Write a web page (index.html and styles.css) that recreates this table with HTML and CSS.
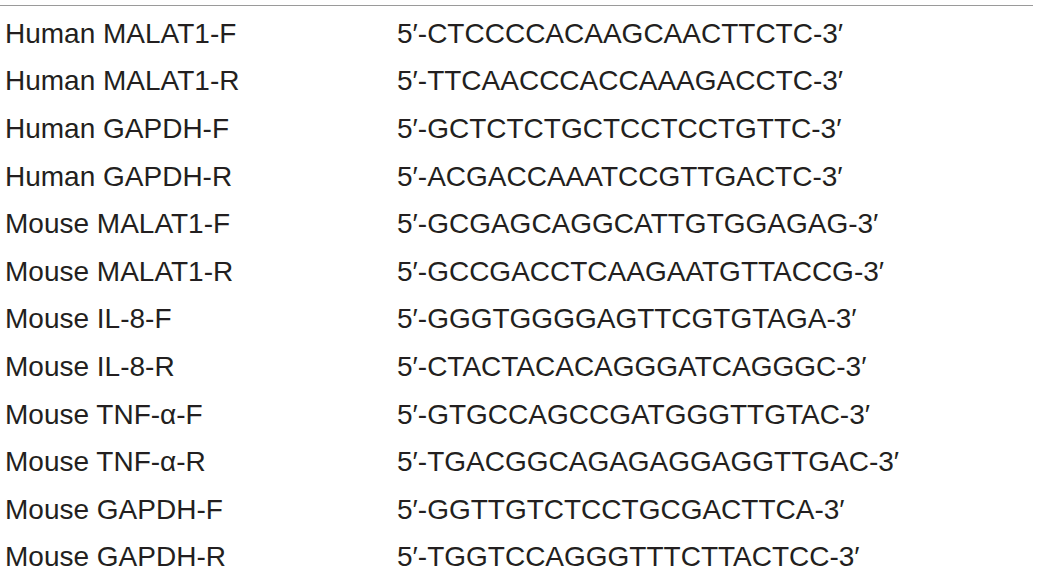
FILE: index.html
```html
<!DOCTYPE html>
<html>
<head>
<meta charset="utf-8">
<link rel="stylesheet" href="styles.css">
</head>
<body>
<div class="table">
  <div class="row"><span class="name">Human MALAT1-F</span><span class="seq">5′-CTCCCCACAAGCAACTTCTC-3′</span></div>
  <div class="row"><span class="name">Human MALAT1-R</span><span class="seq">5′-TTCAACCCACCAAAGACCTC-3′</span></div>
  <div class="row"><span class="name">Human GAPDH-F</span><span class="seq">5′-GCTCTCTGCTCCTCCTGTTC-3′</span></div>
  <div class="row"><span class="name">Human GAPDH-R</span><span class="seq">5′-ACGACCAAATCCGTTGACTC-3′</span></div>
  <div class="row"><span class="name">Mouse MALAT1-F</span><span class="seq">5′-GCGAGCAGGCATTGTGGAGAG-3′</span></div>
  <div class="row"><span class="name">Mouse MALAT1-R</span><span class="seq">5′-GCCGACCTCAAGAATGTTACCG-3′</span></div>
  <div class="row"><span class="name">Mouse IL-8-F</span><span class="seq">5′-GGGTGGGGAGTTCGTGTAGA-3′</span></div>
  <div class="row"><span class="name">Mouse IL-8-R</span><span class="seq">5′-CTACTACACAGGGATCAGGGC-3′</span></div>
  <div class="row"><span class="name">Mouse TNF-α-F</span><span class="seq">5′-GTGCCAGCCGATGGGTTGTAC-3′</span></div>
  <div class="row"><span class="name">Mouse TNF-α-R</span><span class="seq">5′-TGACGGCAGAGAGGAGGTTGAC-3′</span></div>
  <div class="row"><span class="name">Mouse GAPDH-F</span><span class="seq">5′-GGTTGTCTCCTGCGACTTCA-3′</span></div>
  <div class="row"><span class="name">Mouse GAPDH-R</span><span class="seq">5′-TGGTCCAGGGTTTCTTACTCC-3′</span></div>
</div>
</body>
</html>
```

FILE: styles.css
```css
html, body {
  margin: 0;
  padding: 0;
  background: #ffffff;
}
body {
  font-family: "Liberation Sans", Arial, sans-serif;
  color: #231f20;
}
.table {
  width: 1033px;
  margin-top: 5px;
  border-top: 1px solid #9a9a9a;
  padding-top: 4px;
}
.row {
  display: grid;
  grid-template-columns: 392px 1fr;
  height: 47.6px;
  align-items: center;
  padding-left: 5px;
  font-size: 28px;
}
```
